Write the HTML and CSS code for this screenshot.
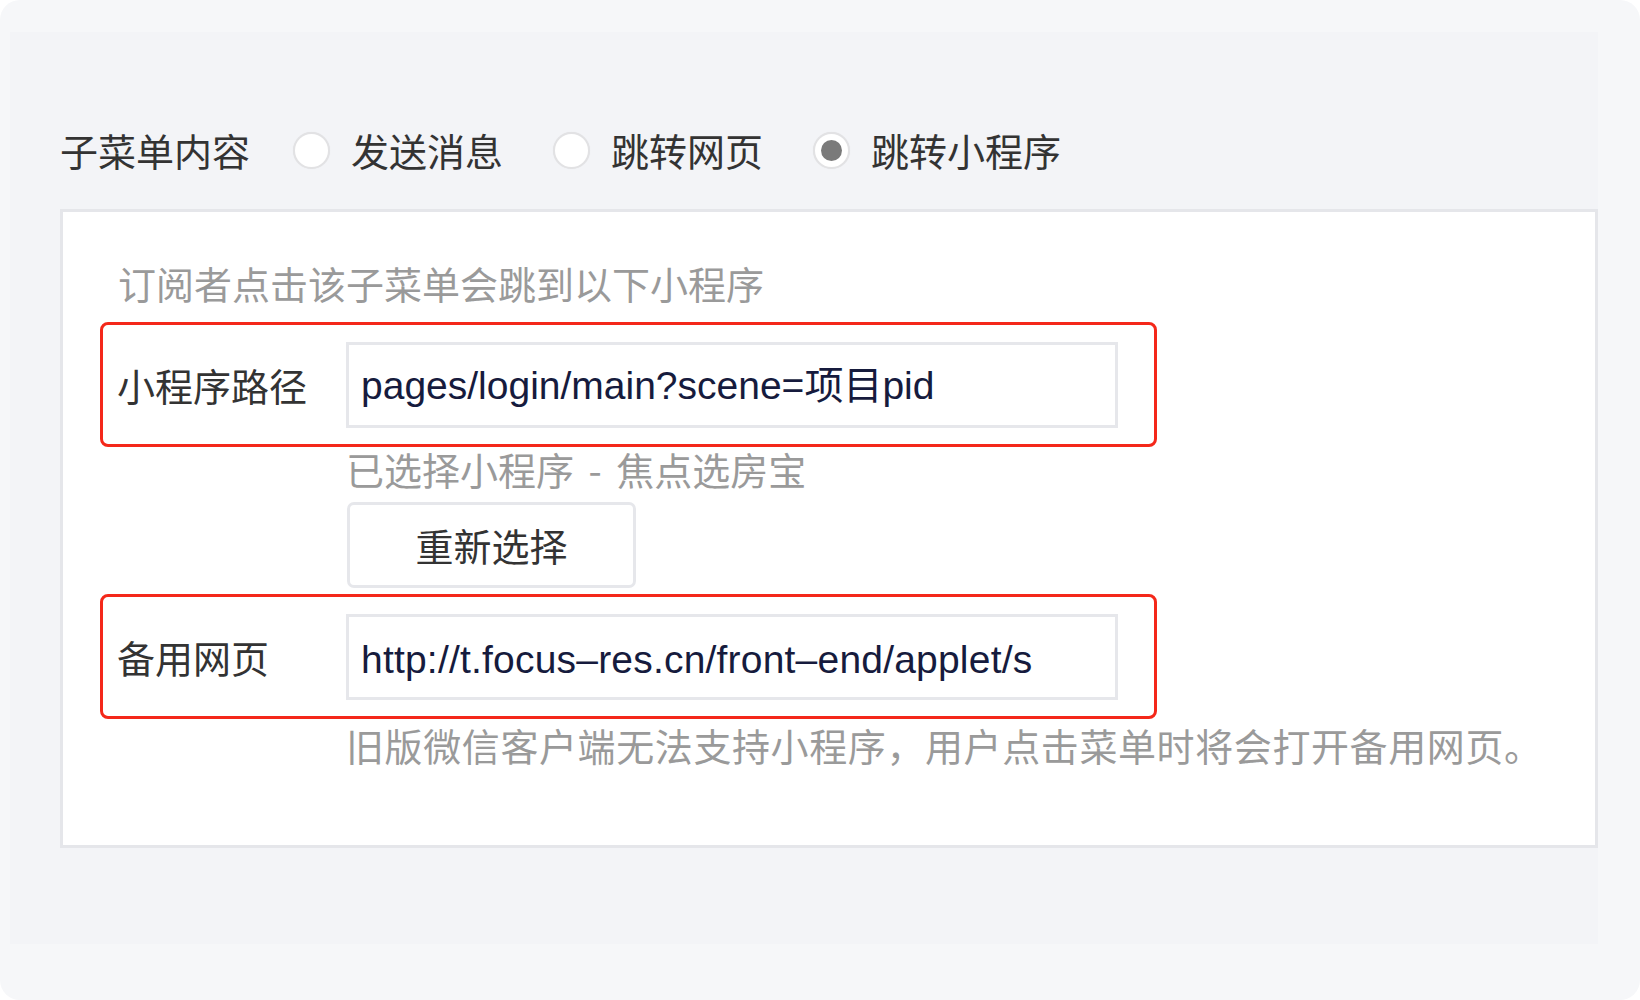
FILE: index.html
```html
<!DOCTYPE html>
<html lang="zh-CN">
<head>
<meta charset="utf-8">
<title>子菜单内容</title>
<link rel="stylesheet" href="styles.css">
</head>
<body>
<div class="screen">
  <div class="panel">
    <div class="type-row">
      <span class="type-label">子菜单内容</span>
      <label class="radio-option"><span class="radio"></span><span>发送消息</span></label>
      <label class="radio-option"><span class="radio"></span><span>跳转网页</span></label>
      <label class="radio-option"><span class="radio checked"></span><span>跳转小程序</span></label>
    </div>
    <div class="card">
      <p class="hint">订阅者点击该子菜单会跳到以下小程序</p>
      <div class="field highlight">
        <span class="field-label">小程序路径</span>
        <input class="text-input" type="text" value="pages/login/main?scene=项目pid" readonly>
      </div>
      <p class="sub-note">已选择小程序 - 焦点选房宝</p>
      <button class="btn" type="button">重新选择</button>
      <div class="field highlight second">
        <span class="field-label">备用网页</span>
        <input class="text-input url" type="text" value="http://t.focus–res.cn/front–end/applet/s" readonly>
      </div>
      <p class="help">旧版微信客户端无法支持小程序，用户点击菜单时将会打开备用网页。</p>
    </div>
  </div>
</div>
</body>
</html>
```

FILE: styles.css
```css
* { box-sizing: border-box; }

html, body {
  margin: 0;
  padding: 0;
  background: #ffffff;
}

body {
  font-family: "Noto Sans CJK SC", "Noto Sans", sans-serif;
  color: #333333;
}

.screen {
  width: 1640px;
  height: 1000px;
  background: #f6f7f9;
  border-radius: 20px;
  padding: 32px 42px 56px 10px;
}

.panel {
  height: 100%;
  background: #f3f4f7;
  padding: 92px 0 95px 50px;
}

.type-row {
  display: flex;
  align-items: center;
  height: 52px;
  font-size: 38px;
  line-height: 52px;
  color: #333333;
}

.type-label {
  margin-right: 43px;
}

.radio-option {
  display: flex;
  align-items: center;
  margin-right: 50px;
}

.radio {
  width: 37px;
  height: 37px;
  border-radius: 50%;
  background: #ffffff;
  border: 2px solid #e2e2e4;
  box-shadow: 0 0 1px rgba(0, 0, 0, 0.08);
  margin-right: 21px;
  display: flex;
  align-items: center;
  justify-content: center;
}

.radio.checked::after {
  content: "";
  width: 21px;
  height: 21px;
  border-radius: 50%;
  background: #7a7a7a;
}

.card {
  margin-top: 33px;
  background: #ffffff;
  border: 3px solid #e5e6ea;
  padding: 45px 0 74px 37px;
  font-size: 38px;
}

.hint {
  margin: 0 0 13px;
  padding-left: 18px;
  line-height: 52px;
  color: #9a9a9a;
}

.field {
  display: flex;
  align-items: center;
  width: 1057px;
}

.highlight {
  border: 3px solid #f4281a;
  border-radius: 8px;
  padding: 17px 36px 16px 14px;
}

.highlight.second {
  margin-top: 6px;
}

.field-label {
  width: 229px;
  flex: none;
  line-height: 52px;
  color: #333333;
}

.text-input {
  width: 772px;
  height: 86px;
  border: 3px solid #e6e7eb;
  border-radius: 0;
  background: #ffffff;
  padding: 0 12px 6px;
  font-family: "Liberation Sans", "Noto Sans CJK SC", sans-serif;
  font-size: 39px;
  color: #161b3d;
  outline: none;
}

.text-input.url {
  padding-top: 6px;
  padding-bottom: 0;
  letter-spacing: 0.2px;
}

.sub-note {
  margin: 0 0 0 246px;
  line-height: 44px;
  color: #9a9a9a;
  word-spacing: 6px;
}

.btn {
  display: block;
  margin: 11px 0 0 247px;
  width: 289px;
  height: 86px;
  border: 3px solid #e6e7eb;
  border-radius: 7px;
  background: #ffffff;
  font-family: "Noto Sans CJK SC", sans-serif;
  font-size: 38px;
  color: #333333;
  padding: 0 0 2px;
}

.help {
  margin: 0 0 0 246px;
  line-height: 52px;
  color: #9a9a9a;
  letter-spacing: 0.6px;
  white-space: nowrap;
}
```
